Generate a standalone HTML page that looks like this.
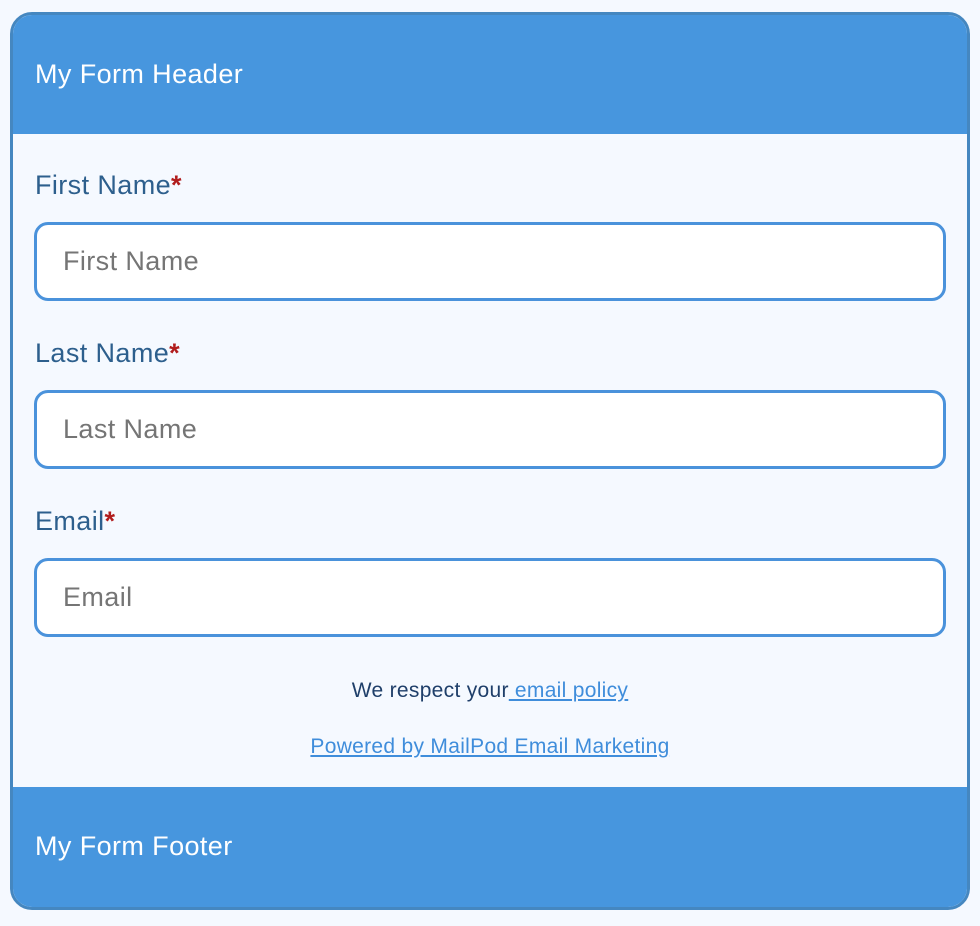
<!DOCTYPE html>
<html><head><style>
*{box-sizing:border-box;margin:0;padding:0}
body{width:980px;height:926px;background:#f5f9ff;font-family:"Liberation Sans",Arial,sans-serif;position:relative;overflow:hidden}
.card{position:absolute;left:10px;top:12px;width:960px;height:898px;border:3px solid #4587c0;border-radius:22px;overflow:hidden;background:#f5f9ff}
.hdr{position:absolute;left:0;top:0;width:100%;height:119px;background:#4796de;color:#fff;font-size:27px;letter-spacing:0.4px;padding-left:22px;line-height:118px}
.ftr{position:absolute;left:0;bottom:0;width:100%;height:120px;background:#4796de;color:#fff;font-size:27px;letter-spacing:0.4px;padding-left:22px;line-height:118px}
.lbl{position:absolute;left:22px;font-size:27px;letter-spacing:0.4px;color:#2d5f8d}
.lbl b{color:#b11d1d;font-weight:bold}
.inp{position:absolute;left:21px;width:912px;height:79px;border:3px solid #4a92db;border-radius:14px;background:#fff;font-size:27px;letter-spacing:0.4px;color:#757575;padding-left:26px;line-height:73px}
.t{position:absolute;left:0;width:100%;text-align:center;font-size:21px;letter-spacing:0.3px;color:#1f3f6a}
a{color:#3f8ddb;text-decoration:underline}
</style></head><body>
<div class="card">
<div class="hdr">My Form Header</div>
<div class="lbl" style="top:155px">First Name<b>*</b></div>
<div class="inp" style="top:207px">First Name</div>
<div class="lbl" style="top:323px">Last Name<b>*</b></div>
<div class="inp" style="top:375px">Last Name</div>
<div class="lbl" style="top:491px">Email<b>*</b></div>
<div class="inp" style="top:543px">Email</div>
<div class="t" style="top:664px">We respect your<a> email policy</a></div>
<div class="t" style="top:720px"><a>Powered by MailPod Email Marketing</a></div>
<div class="ftr">My Form Footer</div>
</div>
</body></html>
